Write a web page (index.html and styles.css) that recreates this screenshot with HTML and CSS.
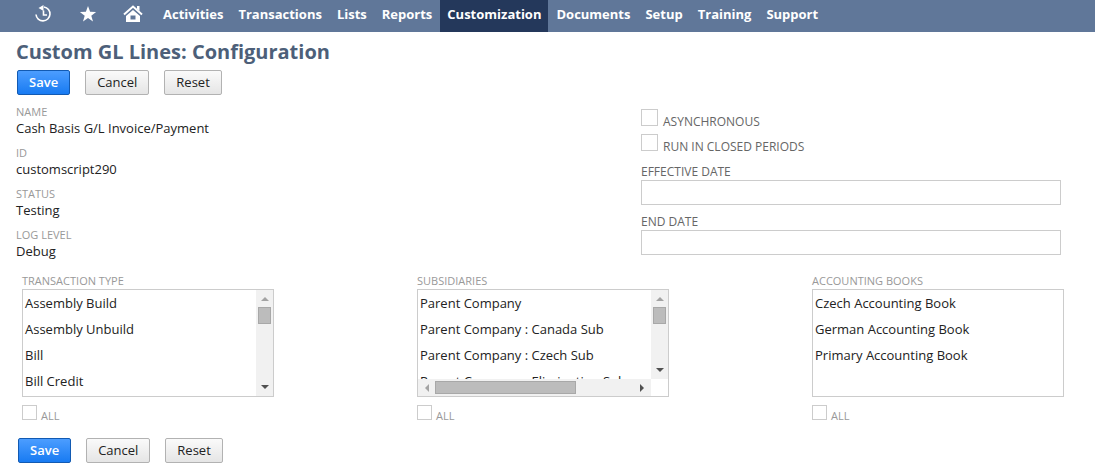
FILE: index.html
```html
<!DOCTYPE html>
<html lang="en">
<head>
<meta charset="utf-8">
<title>Custom GL Lines: Configuration</title>
<link rel="stylesheet" href="styles.css">
</head>
<body>
<nav class="topbar">
  <a class="icon-link" href="#" aria-label="Recent records"><svg width="18" height="18" viewBox="0 0 18 18"><path d="M2 9.500a7 7 0 1 0 8-7.500M9.500 5.500v4.500h3.500" fill="none" stroke="#fff" stroke-width="1.600"/><path d="M9.500 0v6L4.500 3z" fill="#fff"/></svg></a>
  <a class="icon-link" href="#" aria-label="Shortcuts"><svg width="18" height="18" viewBox="0 0 18 18"><path d="M9 1l2.100 5.800 6 .2-4.800 3.700 1.700 5.800L9 13l-5 3.500 1.700-5.800L.9 7l6-.2z" fill="#fff"/></svg></a>
  <a class="icon-link" href="#" aria-label="Home"><svg width="20" height="18" viewBox="0 0 20 18"><path d="M1 9.500L10 1.500l9 8" fill="none" stroke="#fff" stroke-width="2"/><path d="M14 1h2.500v5L14 4z" fill="#fff"/><path fill-rule="evenodd" d="M10 5l7 6v6H3v-6zM7.500 10.500v4h5v-4z" fill="#fff"/></svg></a>
  <a class="tab" href="#">Activities</a>
  <a class="tab" href="#">Transactions</a>
  <a class="tab" href="#">Lists</a>
  <a class="tab" href="#">Reports</a>
  <a class="tab tab-active" href="#" aria-current="page">Customization</a>
  <a class="tab" href="#">Documents</a>
  <a class="tab" href="#">Setup</a>
  <a class="tab" href="#">Training</a>
  <a class="tab" href="#">Support</a>
</nav>
<main>
  <h1 class="title">Custom GL Lines: Configuration</h1>
  <form>
    <div class="actions">
      <button class="btn btn-primary" type="button">Save</button>
      <button class="btn" type="button">Cancel</button>
      <button class="btn" type="reset">Reset</button>
    </div>
    <div class="details">
      <dl class="facts">
        <div class="fact"><dt>NAME</dt><dd>Cash Basis G/L Invoice/Payment</dd></div>
        <div class="fact"><dt>ID</dt><dd>customscript290</dd></div>
        <div class="fact"><dt>STATUS</dt><dd>Testing</dd></div>
        <div class="fact"><dt>LOG LEVEL</dt><dd>Debug</dd></div>
      </dl>
      <div class="options">
        <label class="check"><input class="box" type="checkbox"><span>ASYNCHRONOUS</span></label>
        <label class="check"><input class="box" type="checkbox"><span>RUN IN CLOSED PERIODS</span></label>
        <label class="field"><span>EFFECTIVE DATE</span><input class="date" type="text"></label>
        <label class="field"><span>END DATE</span><input class="date" type="text"></label>
      </div>
    </div>
    <div class="filters">
      <div class="filter">
        <label class="caption" for="types">TRANSACTION TYPE</label>
        <div class="listbox">
          <select class="list" id="types" multiple>
            <option>Assembly Build</option>
            <option>Assembly Unbuild</option>
            <option>Bill</option>
            <option>Bill Credit</option>
          </select>
          <div class="vbar"><i class="arrow up"></i><i class="thumb"></i><i class="arrow down"></i></div>
        </div>
        <label class="check check-all"><input class="box" type="checkbox"><span>ALL</span></label>
      </div>
      <div class="filter">
        <label class="caption" for="subs">SUBSIDIARIES</label>
        <div class="listbox">
          <select class="list" id="subs" multiple>
            <option>Parent Company</option>
            <option>Parent Company : Canada Sub</option>
            <option>Parent Company : Czech Sub</option>
            <option>Parent Company : Elimination Sub</option>
          </select>
          <div class="vbar"><i class="arrow up"></i><i class="thumb"></i><i class="arrow down"></i></div>
          <div class="hbar"><i class="arrow left"></i><i class="thumb"></i><i class="arrow right"></i></div>
        </div>
        <label class="check check-all"><input class="box" type="checkbox"><span>ALL</span></label>
      </div>
      <div class="filter">
        <label class="caption" for="books">ACCOUNTING BOOKS</label>
        <div class="listbox">
          <select class="list" id="books" multiple>
            <option>Czech Accounting Book</option>
            <option>German Accounting Book</option>
            <option>Primary Accounting Book</option>
          </select>
        </div>
        <label class="check check-all"><input class="box" type="checkbox"><span>ALL</span></label>
      </div>
    </div>
    <div class="actions actions-bottom">
      <button class="btn btn-primary" type="button">Save</button>
      <button class="btn" type="button">Cancel</button>
      <button class="btn" type="reset">Reset</button>
    </div>
  </form>
</main>
</body>
</html>
```
FILE: styles.css
```css
* { box-sizing: border-box; }
body {
  margin: 0;
  background: #fff;
  color: #222;
  font: 13px/18px "Open Sans", "Noto Sans", sans-serif;
}
button, input, select { font: inherit; color: inherit; }

.topbar {
  display: flex;
  gap: 1px;
  height: 32px;
  padding-left: 21px;
  background: #607799;
}
.icon-link {
  display: flex;
  flex: none;
  width: 44px;
  align-items: center;
  justify-content: center;
  padding-bottom: 4px;
}
.tab {
  padding: 5px 7px;
  color: #fff;
  font-weight: 700;
  text-decoration: none;
}
.tab-active { background: #24385b; }

.title {
  margin: 0;
  padding: 6px 16px 0;
  color: #4d5f79;
  font-size: 20px;
  line-height: 28px;
  font-weight: 700;
}
.actions {
  display: flex;
  gap: 15px;
  padding: 4px 17px 0;
}
.actions-bottom { padding: 14px 18px 10px; }
.btn {
  height: 25px;
  padding: 0 11px;
  border: 1px solid #b2b2b2;
  border-radius: 2px;
  background: linear-gradient(#fafafa, #e5e5e5);
  color: #222;
  line-height: 23px;
}
.btn-primary {
  border-color: #125ab2;
  background: linear-gradient(#4c9dff, #187bf2);
  color: #fff;
  font-weight: 600;
}

.details {
  display: grid;
  grid-template-columns: 125fr 84fr;
  padding: 9px 34px 0 16px;
}
.facts { margin: 0; }
.fact { margin-bottom: 8px; }
.fact dt, .caption {
  color: #999;
  font-size: 11px;
  line-height: 16px;
}
.fact dd { margin: 0; line-height: 17px; }
.options { padding-top: 1px; color: #666; font-size: 12px; line-height: 17px; }
.check {
  display: flex;
  align-items: flex-end;
  gap: 5px;
  height: 25px;
}
.box {
  appearance: none;
  flex: none;
  width: 17px;
  height: 17px;
  margin: 0 0 4px;
  border: 1px solid #ccc;
  background: #fff;
}
.field { display: block; padding-top: 8px; }
.field span { display: block; }
.date {
  display: block;
  width: 100%;
  height: 25px;
  border: 1px solid #ccc;
  background: #fff;
}

.filters {
  display: grid;
  grid-template-columns: repeat(3, minmax(0, 1fr));
  gap: 143px;
  padding: 5px 31px 0 22px;
}
.caption { display: block; }
.listbox {
  display: grid;
  grid-template-columns: minmax(0, 1fr) auto;
  grid-template-rows: minmax(0, 1fr) auto;
  height: 108px;
  border: 1px solid #ccc;
}
.list {
  width: 100%;
  height: 100%;
  padding: 0;
  border: 0;
  outline: 0;
  background: #fff;
  overflow: hidden;
  scrollbar-width: none;
}
.list option {
  min-height: 26px;
  padding: 4px 2px;
  line-height: 18px;
}
.vbar, .hbar {
  display: flex;
  align-items: center;
  background: #f1f1f1;
}
.vbar { flex-direction: column; width: 17px; padding: 7px 0; }
.hbar { height: 17px; padding: 0 7px; }
.thumb { border: 1px solid #a8a8a8; background: #bcbcbc; }
.vbar .thumb { width: 13px; height: 17px; margin: 6px 0 auto; }
.hbar .thumb { width: 141px; height: 13px; margin: 0 auto 0 6px; }
.arrow { border: 4px solid transparent; }
.up { border-top: 0; border-bottom-color: #a3a3a3; }
.down { border-bottom: 0; border-top-color: #505050; }
.left { border-left: 0; border-right-color: #a3a3a3; }
.right { border-right: 0; border-left-color: #505050; }
.check-all { height: 27px; color: #999; font-size: 11px; line-height: 16px; gap: 4px; }
.check-all .box { width: 15px; height: 15px; }
```
